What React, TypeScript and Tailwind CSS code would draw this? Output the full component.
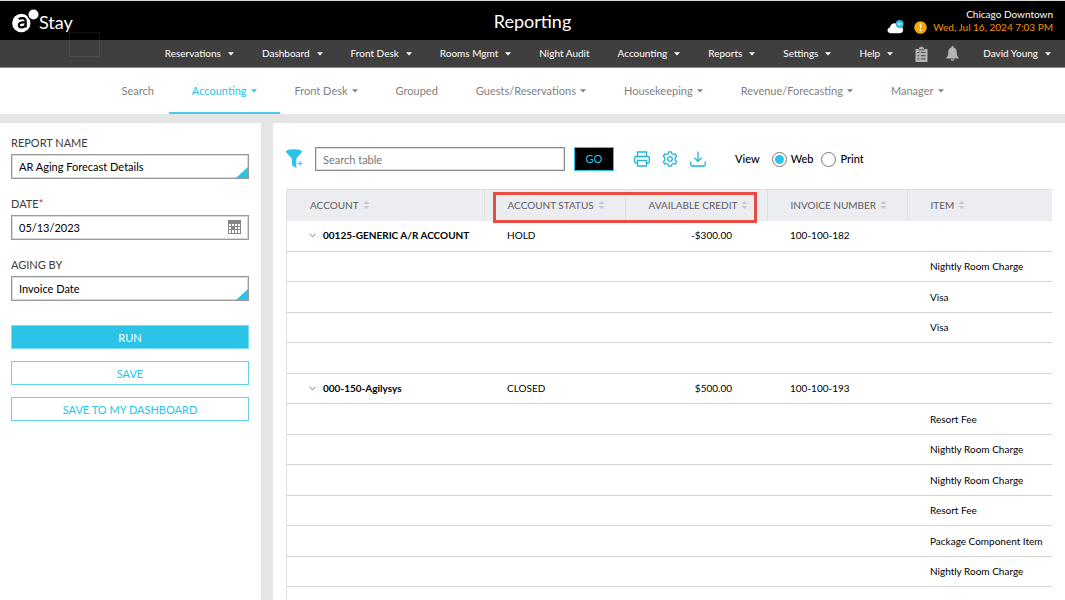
import { useState } from 'react';

type NavItem = { label: string; menu: boolean };

const MAIN_NAV: NavItem[] = [
  { label: 'Reservations', menu: true },
  { label: 'Dashboard', menu: true },
  { label: 'Front Desk', menu: true },
  { label: 'Rooms Mgmt', menu: true },
  { label: 'Night Audit', menu: false },
  { label: 'Accounting', menu: true },
  { label: 'Reports', menu: true },
  { label: 'Settings', menu: true },
  { label: 'Help', menu: true },
];

const REPORT_TABS: NavItem[] = [
  { label: 'Search', menu: false },
  { label: 'Accounting', menu: true },
  { label: 'Front Desk', menu: true },
  { label: 'Grouped', menu: false },
  { label: 'Guests/Reservations', menu: true },
  { label: 'Housekeeping', menu: true },
  { label: 'Revenue/Forecasting', menu: true },
  { label: 'Manager', menu: true },
];

type Row = {
  account?: string;
  status?: string;
  credit?: string;
  invoice?: string;
  item?: string;
};

const ROWS: Row[] = [
  { account: '00125-GENERIC A/R ACCOUNT', status: 'HOLD', credit: '-$300.00', invoice: '100-100-182' },
  { item: 'Nightly Room Charge' },
  { item: 'Visa' },
  { item: 'Visa' },
  {},
  { account: '000-150-Agilysys', status: 'CLOSED', credit: '$500.00', invoice: '100-100-193' },
  { item: 'Resort Fee' },
  { item: 'Nightly Room Charge' },
  { item: 'Nightly Room Charge' },
  { item: 'Resort Fee' },
  { item: 'Package Component Item' },
  { item: 'Nightly Room Charge' },
];

function Caret() {
  return (
    <svg width="6" height="4" viewBox="0 0 6 4" fill="currentColor" aria-hidden="true">
      <path d="M0 0.3h6L3 3.6z" />
    </svg>
  );
}

function SortIcon() {
  return (
    <svg width="7" height="8" viewBox="0 0 7 8" fill="#c9c9cb" className="shrink-0" aria-hidden="true">
      <path d="M3.5 0 6.6 2.9H.4zM3.5 8 6.6 5.1H.4z" />
    </svg>
  );
}

function Logo() {
  return (
    <svg width="27" height="24" viewBox="0 0 27 24" aria-hidden="true">
      <circle cx="9.3" cy="14" r="9.2" fill="#fff" />
      <circle cx="21.5" cy="5.5" r="6.3" fill="#000" />
      <circle cx="21.5" cy="5.5" r="5" fill="#fff" />
      <path
        d="M6.8 10.2c1-.8 2.2-1.1 3.4-1.1 2.3 0 3.5 1.1 3.5 3.2v6.2M13.5 13.2c-4.2 0-6.7.7-6.7 2.9 0 1.5 1.1 2.3 2.6 2.3 2.4 0 4.1-1.4 4.1-3.3"
        fill="none"
        stroke="#000"
        strokeWidth="2.2"
      />
    </svg>
  );
}

function Header() {
  return (
    <header className="relative text-white">
      <div className="grid h-10 grid-cols-3 items-center border-t border-[#d5d9d7] bg-black px-3">
        <div className="flex items-center">
          <Logo />
          <span className="pt-0.5 text-[18px] leading-5">Stay</span>
        </div>
        <h1 className="text-center text-[18px] leading-6">Reporting</h1>
        <div className="flex items-end justify-end gap-1.5">
          <svg width="17" height="14" viewBox="0 0 16 14" aria-hidden="true">
            <path
              d="M3.4 13.2C1.4 13.2 0 12 0 10.3c0-1.5 1-2.6 2.5-2.8C2.7 5 4.5 3.2 7 3.2c2 0 3.6 1.1 4.3 2.9 2.5-.2 4.4 1.3 4.4 3.6 0 2.1-1.5 3.5-3.6 3.5z"
              fill="#fff"
            />
            <circle cx="12.2" cy="4" r="3.9" fill="#2bb9dc" />
            <path d="M14.5 4H10.3M12 2.3 10.3 4 12 5.7" fill="none" stroke="#d9f5fb" strokeWidth="1" />
          </svg>
          <svg width="13" height="13" viewBox="0 0 13 13" className="ml-1" aria-hidden="true">
            <circle cx="6.5" cy="6.5" r="6.3" fill="#f5a800" />
            <path d="M5.6 2.5h1.8l-.3 4.8H5.9z" fill="#fff" />
            <circle cx="6.5" cy="9.3" r="1" fill="#fff" />
          </svg>
          <div className="text-right text-[10px] leading-[13px]">
            <div>Chicago Downtown</div>
            <div className="text-[#f39200]">Wed, Jul 16, 2024 7:03 PM</div>
          </div>
        </div>
      </div>
      <span className="pointer-events-none absolute top-8 left-[69px] h-[25px] w-[31px] border border-white/8" />

      <nav
        aria-label="Main"
        className="flex h-7 items-center justify-end gap-7 border-b border-[#8a8a8a] bg-[#3f3f3f] pr-3.5 text-[10px]"
      >
        {MAIN_NAV.map((n) => (
          <a key={n.label} href="#" className="flex items-center gap-[7px] whitespace-nowrap">
            {n.label}
            {n.menu && <Caret />}
          </a>
        ))}
        <div className="-mr-1 -ml-1.5 flex items-center gap-[18px] text-[#b5b5b5]">
          <button type="button" aria-label="Tasks">
            <svg width="13" height="16" viewBox="0 0 13 16" className="block">
              <path d="M4 1.5h1.2a1.4 1.4 0 0 1 2.6 0H9V3h3.5v13H.5V3H4z" fill="currentColor" />
              <path
                d="M2.3 6.3l.8.8 1.2-1.5M2.3 9.5l.8.8 1.2-1.5M2.3 12.7l.8.8 1.2-1.5M5.8 6.5h4.7M5.8 9.7h4.7M5.8 12.9h4.7M3.5 3.9h6"
                fill="none"
                stroke="#3f3f3f"
                strokeWidth=".9"
              />
            </svg>
          </button>
          <button type="button" aria-label="Notifications">
            <svg width="13" height="15" viewBox="0 0 13 15" fill="currentColor" className="block">
              <path d="M6.5 0c.6 0 1 .4 1 1v.4c2 .5 3.2 2 3.2 4.3 0 3.4.6 4.6 2.1 6v.8H.2v-.8c1.5-1.4 2.1-2.6 2.1-6 0-2.3 1.2-3.8 3.2-4.3V1c0-.6.4-1 1-1zM4.7 13.2h3.6c-.2 1-.9 1.6-1.8 1.6s-1.6-.6-1.8-1.6z" />
            </svg>
          </button>
        </div>
        <button type="button" className="flex items-center gap-[7px] whitespace-nowrap">
          David Young
          <Caret />
        </button>
      </nav>
    </header>
  );
}

function ReportTabs() {
  return (
    <nav aria-label="Reports" className="flex h-[46px] justify-center bg-white text-[11px] text-[#7f7f7f]">
      {REPORT_TABS.map((t) => (
        <a
          key={t.label}
          href="#"
          className={
            t.label === 'Accounting'
              ? 'relative flex items-center gap-1 px-[19px] whitespace-nowrap text-[#2bc3e6] after:absolute after:-inset-x-1 after:bottom-0 after:h-0.5 after:bg-[#4ccbe8]'
              : 'flex items-center gap-1 px-[19px] whitespace-nowrap'
          }
        >
          {t.label}
          {t.menu && <Caret />}
        </a>
      ))}
    </nav>
  );
}

function SelectField({ id, label, value }: { id: string; label: string; value: string }) {
  return (
    <div>
      <label htmlFor={id} className="block leading-4 text-[#3c3c3c]">
        {label}
      </label>
      <div className="relative mt-[3px]">
        <select
          id={id}
          defaultValue={value}
          className="block h-[25px] w-full appearance-none border border-[#9a9a9a] bg-white px-[7px] pt-0.5 text-black outline-1 -outline-offset-2 outline-[#d8d8d8]"
        >
          <option>{value}</option>
        </select>
        <svg
          width="12"
          height="11"
          viewBox="0 0 12 11"
          className="pointer-events-none absolute right-px bottom-px"
          aria-hidden="true"
        >
          <path d="M12 0v11H0z" fill="#2bc3e6" />
        </svg>
      </div>
    </div>
  );
}

function Filters() {
  return (
    <form
      onSubmit={(e) => e.preventDefault()}
      className="flex w-[261px] shrink-0 flex-col gap-[17px] bg-white pt-3 pr-3 pl-[11px] text-[11px]"
    >
      <SelectField id="report-name" label="REPORT NAME" value="AR Aging Forecast Details" />
      <div>
        <label htmlFor="date" className="block leading-4 text-[#3c3c3c]">
          DATE<span className="text-[#f01414]">*</span>
        </label>
        <div className="relative mt-[3px]">
          <input
            id="date"
            type="text"
            defaultValue="05/13/2023"
            className="block h-[25px] w-full border border-[#9a9a9a] bg-white px-[7px] text-black outline-1 -outline-offset-2 outline-[#d8d8d8]"
          />
          <button type="button" aria-label="Pick a date" className="absolute top-[5px] right-2">
            <svg width="13" height="14" viewBox="0 0 13 14" className="block">
              <path d="M0 0h13v14H0z" fill="#858585" />
              <path
                d="M1 4h2v2H1zM4 4h2v2H4zM7 4h2v2H7zM10 4h2v2h-2zM1 7h2v2H1zM7 7h2v2H7zM10 7h2v2h-2zM1 10h2v3H1zM4 10h2v3H4zM7 10h2v3H7zM10 10h2v3h-2z"
                fill="#fff"
              />
            </svg>
          </button>
        </div>
      </div>
      <SelectField id="aging-by" label="AGING BY" value="Invoice Date" />
      <div className="mt-[7px] flex flex-col gap-3 text-[#2bc3e6]">
        <button type="submit" className="h-6 border border-[#7fdcf0] bg-[#2bc3e6] pt-0.5 text-white">
          RUN
        </button>
        <button type="button" className="h-6 border border-[#62d3ec] bg-white pt-0.5">
          SAVE
        </button>
        <button type="button" className="h-6 border border-[#62d3ec] bg-white pt-0.5">
          SAVE TO MY DASHBOARD
        </button>
      </div>
    </form>
  );
}

function Toolbar() {
  const [view, setView] = useState('Web');

  return (
    <div className="flex items-center text-[11px]">
      <button type="button" aria-label="Filter">
        <svg width="17" height="20" viewBox="0 0 17 20" fill="#2bc3e6" className="block">
          <path d="M0 2.6C0 1.2 3.5.3 8 .3s8 .9 8 2.3c0 .5-.3.9-.7 1.3L10.3 9.6V19L6 16.2V9.6L.7 3.9C.3 3.5 0 3.1 0 2.6z" />
          <path d="M11 12h6v5h-6z" fill="#fff" />
          <path d="M13.6 11.9h1v2h1.900v1h-1.900v1.900h-1v-1.900h-1.900v-1h1.900z" />
        </svg>
      </button>
      <input
        type="text"
        aria-label="Search table"
        placeholder="Search table"
        className="ml-3 h-6 w-[250px] border border-[#8c8c8c] px-[7px] outline-1 -outline-offset-2 outline-[#dcdcdc] placeholder:text-[#777]"
      />
      <button type="button" className="ml-[9px] h-6 w-10 border border-[#2bc3e6] bg-black text-[#2bc3e6]">
        GO
      </button>
      <div className="ml-5 flex items-center gap-3">
        <button type="button" aria-label="Print report">
          <svg width="16" height="16" viewBox="0 0 16 16" fill="none" stroke="#21b4d8" strokeWidth="1.3" className="block">
            <path d="M3.5 5.5V1h9v4.5M3.5 12H1.9A1.2 1.2 0 0 1 .7 10.8V6.7c0-.7.5-1.2 1.2-1.2h12.2c.7 0 1.2.5 1.2 1.2v4.1c0 .7-.5 1.2-1.2 1.2h-1.6M3.5 9.5h9V15h-9z" />
          </svg>
        </button>
        <button type="button" aria-label="Settings">
          <svg width="16" height="16" viewBox="0 0 16 16" fill="none" stroke="#21b4d8" strokeWidth="1.3" strokeLinejoin="round" className="block">
            <path d="M6.6.8h2.8l.5 2 1.3.7 2-.6 1.5 2.4-1.5 1.5v2.4l1.5 1.5-1.5 2.4-2-.6-1.3.7-.5 2H6.6l-.5-2-1.3-.7-2 .6-1.5-2.4 1.5-1.5V6.8L1.3 5.3l1.5-2.4 2 .6 1.3-.7z" />
            <circle cx="8" cy="8" r="2.3" />
          </svg>
        </button>
        <button type="button" aria-label="Download">
          <svg width="16" height="16" viewBox="0 0 16 16" fill="none" stroke="#21b4d8" strokeWidth="1.3" className="block">
            <path d="M8 .5v9.7M4.2 6.6 8 10.3l3.8-3.7M.8 10.5v3.2c0 .8.5 1.3 1.3 1.3h11.8c.8 0 1.3-.5 1.3-1.3v-3.2" />
          </svg>
        </button>
      </div>
      <fieldset className="ml-[29px] flex items-center font-medium text-black">
        <legend className="float-left mr-3">View</legend>
        <div className="flex gap-2">
          {['Web', 'Print'].map((v) => (
            <label key={v} className="flex items-center gap-1">
              <input
                type="radio"
                name="view"
                value={v}
                checked={view === v}
                onChange={() => setView(v)}
                className="size-[15px] appearance-none rounded-full border border-[#777] bg-white bg-clip-content p-0.5 checked:bg-[#2bc3e6]"
              />
              {v}
            </label>
          ))}
        </div>
      </fieldset>
    </div>
  );
}

function ReportTable() {
  return (
    <div className="mt-[18px] grow border-l border-[#dfdfe1]">
      <table className="w-full table-fixed border-collapse text-left text-[10px] text-black">
        <colgroup>
          <col className="w-[197px]" />
          <col className="w-[141px]" />
          <col className="w-[142px]" />
          <col className="w-[140px]" />
          <col />
        </colgroup>
        <thead className="bg-[#ecedf1] text-[#5c5c5f]">
          <tr className="h-[31px]">
            <th className="border-t border-r border-[#dddee1] pl-[23px] font-normal">
              <span className="flex items-center gap-1">ACCOUNT <SortIcon /></span>
            </th>
            <th className="relative border-t border-r border-[#dddee1] pl-[23px] font-normal">
              <span className="flex items-center gap-1">ACCOUNT STATUS <SortIcon /></span>
              {/* callout round the status and credit headings */}
              <span className="pointer-events-none absolute top-0.5 left-2 z-10 h-[31px] w-[264px] border-3 border-[#e84c43]" />
            </th>
            <th className="border-t border-r border-[#dddee1] pl-[23px] font-normal">
              <span className="flex items-center gap-1">AVAILABLE CREDIT <SortIcon /></span>
            </th>
            <th className="border-t border-r border-[#dddee1] pl-[23px] font-normal">
              <span className="flex items-center gap-1">INVOICE NUMBER <SortIcon /></span>
            </th>
            <th className="border-t border-[#dddee1] pl-[23px] font-normal">
              <span className="flex items-center gap-1">ITEM <SortIcon /></span>
            </th>
          </tr>
        </thead>
        <tbody>
          {ROWS.map((r, i) => (
            <tr key={i} className="border-b border-[#d4d4d4] odd:h-[31px] even:h-[30px]">
              <td className="pl-[22px] font-bold whitespace-nowrap">
                {r.account && (
                  <button type="button" className="flex items-center gap-[7px]">
                    <svg width="7" height="5" viewBox="0 0 7 5" fill="none" stroke="#777" aria-hidden="true">
                      <path d="M.5.8l3 3 3-3" />
                    </svg>
                    {r.account}
                  </button>
                )}
              </td>
              <td className="pl-[23px]">{r.status}</td>
              <td className="pr-[35px] text-right">{r.credit}</td>
              <td className="pl-[23px]">{r.invoice}</td>
              <td className="pl-[23px] whitespace-nowrap">{r.item}</td>
            </tr>
          ))}
        </tbody>
      </table>
    </div>
  );
}

export default function App() {
  return (
    <div className="flex min-h-screen flex-col bg-[#e5e5e5] font-[Lato,sans-serif]">
      <Header />
      <ReportTabs />
      <div className="mt-[9px] flex grow gap-3">
        <Filters />
        <main className="flex min-w-0 grow flex-col bg-white pt-6 pr-[13px] pl-[13px]">
          <Toolbar />
          <ReportTable />
        </main>
      </div>
    </div>
  );
}
